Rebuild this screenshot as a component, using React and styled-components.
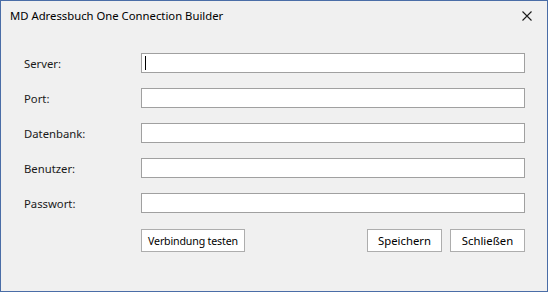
import React from 'react';
import styled, { createGlobalStyle } from 'styled-components';

const GlobalStyle = createGlobalStyle`
    html, body {
        margin: 0;
        padding: 0;
        background: #f0f0f0;
    }
    * {
        box-sizing: border-box;
    }
`;

const fields = ['Server:', 'Port:', 'Datenbank:', 'Benutzer:', 'Passwort:'];

export default function App() {
    return (
        <>
            <GlobalStyle />
            <Window>
                <TitleBar>
                    <Title>MD Adressbuch One Connection Builder</Title>
                    <CloseButton aria-label="Schließen">
                        <svg width="10" height="10" viewBox="0 0 10 10">
                            <path d="M0.5 0.5 L9.5 9.5 M9.5 0.5 L0.5 9.5" stroke="#1a1a1a" strokeWidth="1.1" fill="none" />
                        </svg>
                    </CloseButton>
                </TitleBar>
                <Form>
                    {fields.map((label, i) => (
                        <Row key={label}>
                            <Label>{label}</Label>
                            <Field>
                                {i === 0 && <Caret />}
                            </Field>
                        </Row>
                    ))}
                    <Actions>
                        <Button>Verbindung testen</Button>
                        <Spacer />
                        <Button wide>Speichern</Button>
                        <Button wide>Schließen</Button>
                    </Actions>
                </Form>
            </Window>
        </>
    );
}

const Window = styled.div`
    width: 548px;
    height: 292px;
    border: 1px solid #4a6da7;
    background: #f0f0f0;
    font-family: "Noto Sans", "Open Sans", sans-serif;
    font-size: 11.3px;
    color: #000;
    display: flex;
    flex-direction: column;
`;

const TitleBar = styled.div`
    height: 29px;
    display: flex;
    align-items: center;
    justify-content: space-between;
    padding: 0 15px 0 9px;
`;

const Title = styled.span`
    color: #000;
`;

const CloseButton = styled.div`
    width: 10px;
    height: 10px;
    display: flex;
`;

const Form = styled.div`
    display: flex;
    flex-direction: column;
    gap: 15px;
    padding: 23px 22px 0 22px;
`;

const Row = styled.div`
    display: flex;
    align-items: center;
    height: 20px;
`;

const Label = styled.span`
    width: 118px;
    padding-left: 1px;
    color: #1a1a1a;
`;

const Field = styled.div`
    flex: 1;
    height: 20px;
    background: #fff;
    border: 1px solid #a0a0a0;
    display: flex;
    align-items: center;
    padding-left: 3px;
`;

const Caret = styled.span`
    width: 1px;
    height: 14px;
    background: #000;
`;

const Actions = styled.div`
    display: flex;
    gap: 8px;
    margin-top: 1px;
    padding-left: 118px;
`;

const Spacer = styled.div`
    flex: 1;
`;

const Button = styled.div`
    height: 23px;
    width: ${props => props.wide ? '75px' : '104px'};
    border: 1px solid #adadad;
    background: #fff;
    display: flex;
    align-items: center;
    justify-content: center;
    color: #000;
    white-space: nowrap;
    font-size: ${props => props.wide ? '11.3px' : '10.6px'};
    letter-spacing: ${props => props.wide ? '0' : '-0.15px'};
`;
